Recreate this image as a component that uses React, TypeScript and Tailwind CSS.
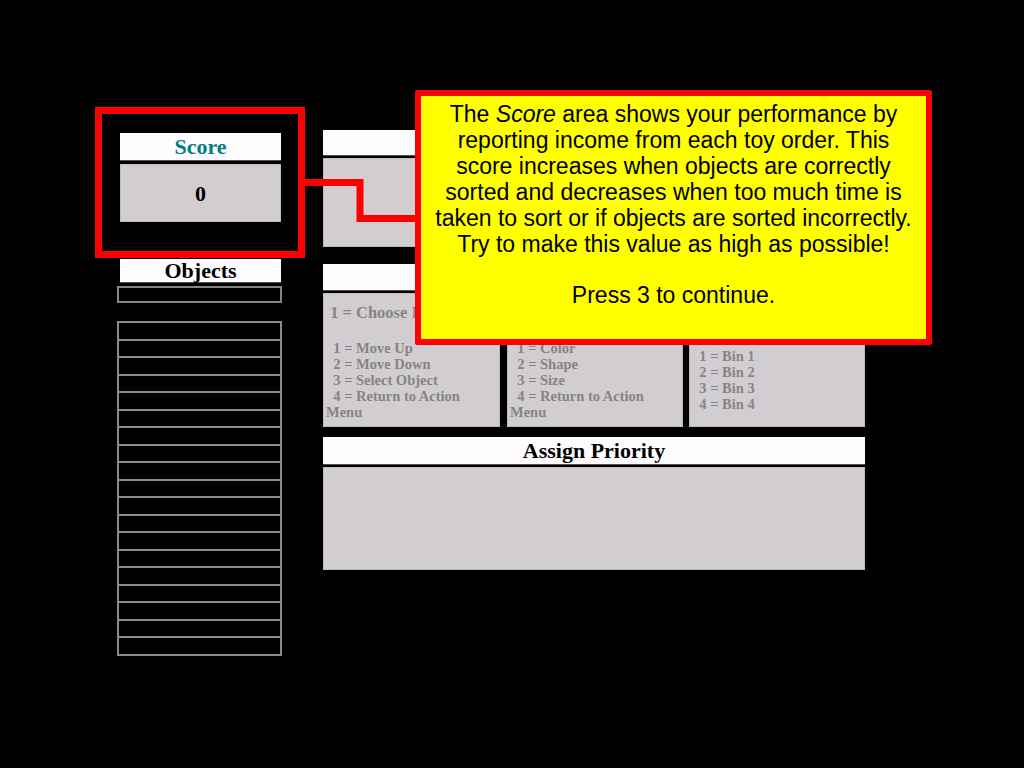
const serif = "font-['Liberation_Serif','Times_New_Roman',serif]";

function Header({ children, className = '' }: { children?: React.ReactNode; className?: string }) {
  return (
    <div
      className={`flex items-center justify-center border-b border-[#505050] bg-[#fffcff] text-[22px] font-bold ${className}`}
    >
      {children}
    </div>
  );
}

function Panel({ heading, items, itemsTop }: { heading?: string; items: React.ReactNode[]; itemsTop: string }) {
  return (
    <div className="h-full flex-1 overflow-hidden border border-[#bdbabd] bg-[#d1cdd1] pl-[2px] pt-[10px] font-bold text-[#858585]">
      <div className="h-[18px] whitespace-nowrap text-[16.5px] leading-[18px]">{heading ? '\u00a0' + heading : null}</div>
      <div className={`${itemsTop} text-[14.5px] leading-[16px]`}>
        {items.map((it, i) => (
          <div key={i}>{it}</div>
        ))}
      </div>
    </div>
  );
}

const sp = '\u00a0\u00a0';

export default function App() {
  return (
    <div className={`relative h-[768px] w-[1024px] overflow-hidden bg-black ${serif}`}>
      <div className="flex pl-[117px] pt-[130px]">
        {/* left column */}
        <div className="flex w-[165px] flex-col pt-[3px]">
          <Header className="ml-[3px] mr-[1px] h-[28px] text-[#008080]">Score</Header>
          <div className="ml-[3px] mr-[1px] mt-[3px] flex h-[58px] items-center justify-center border border-[#bdbabd] bg-[#d1cdd1] text-[22px] font-bold text-black">
            0
          </div>
          <Header className="ml-[3px] mr-[1px] mt-[37px] h-[24px] text-black">Objects</Header>
          <div className="mt-[3px] h-[17px] border-2 border-[#858585] bg-black" />
          <div className="mt-[18px] flex flex-col">
            {Array.from({ length: 19 }).map((_, i) => (
              <div
                key={i}
                className={`h-[19.5px] border-2 border-[#8a8a8a] bg-black ${i > 0 ? '-mt-[2px]' : ''}`}
              />
            ))}
          </div>
        </div>

        {/* right column */}
        <div className="ml-[41px] flex w-[542px] flex-col">
          <Header className="h-[26px]" />
          <div className="mt-[2px] h-[89px] border border-[#bdbabd] bg-[#d1cdd1]" />
          <Header className="mt-[17px] h-[27px]" />
          <div className="mt-[2px] flex h-[134px]">
            <div className="w-[177px]">
              <Panel
                heading="1 = Choose Item"
                itemsTop="mt-[18px]"
                items={[`${sp}1 = Move Up`, `${sp}2 = Move Down`, `${sp}3 = Select Object`, <>{sp}4 = Return to Action<br />Menu</>]}
              />
            </div>
            <div className="ml-[7px] w-[176px]">
              <Panel
                itemsTop="mt-[18px]"
                items={[`${sp}1 = Color`, `${sp}2 = Shape`, `${sp}3 = Size`, <>{sp}4 = Return to Action<br />Menu</>]}
              />
            </div>
            <div className="ml-[6px] w-[176px]">
              <Panel
                itemsTop="mt-[26px]"
                items={[`${sp}1 = Bin 1`, `${sp}2 = Bin 2`, `${sp}3 = Bin 3`, `${sp}4 = Bin 4`]}
              />
            </div>
          </div>
          <Header className="mt-[10px] h-[28px] text-black">Assign Priority</Header>
          <div className="mt-[2px] h-[103px] border border-[#bdbabd] bg-[#d1cdd1]" />
        </div>
      </div>

      {/* highlight around score */}
      <div className="absolute left-[95px] top-[107px] h-[151px] w-[210px] border-[7px] border-[#ff0000]" />

      {/* connector */}
      <svg className="pointer-events-none absolute left-0 top-0" width="1024" height="768">
        <polyline
          points="304,182.5 360,182.5 360,218.5 416,218.5"
          fill="none"
          stroke="#ff0000"
          strokeWidth="7"
          strokeLinejoin="miter"
        />
      </svg>

      {/* callout */}
      <div className="absolute left-[415px] top-[90px] h-[255px] w-[517px] rounded-[2px] border-[6px] border-[#ff0000] bg-[#ffff00] pt-[6px] text-center font-['Liberation_Sans',Arial,sans-serif] text-[23px] leading-[25.9px] text-black">
        The <i>Score</i> area shows your performance by
        <br />
        reporting income from each toy order. This
        <br />
        score increases when objects are correctly
        <br />
        sorted and decreases when too much time is
        <br />
        taken to sort or if objects are sorted incorrectly.
        <br />
        Try to make this value as high as possible!
        <br />
        <br />
        Press 3 to continue.
      </div>
    </div>
  );
}
